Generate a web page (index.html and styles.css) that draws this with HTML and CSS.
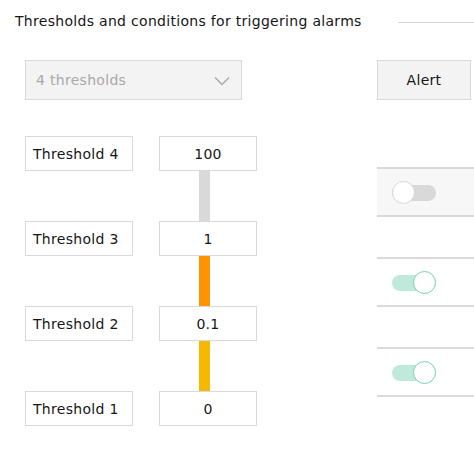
FILE: index.html
```html
<!DOCTYPE html>
<html>
<head>
<meta charset="utf-8">
<link rel="stylesheet" href="styles.css">
</head>
<body>
<div class="page">
  <div class="header">
    <div class="title">Thresholds and conditions for triggering alarms</div>
    <div class="rule"></div>
  </div>
  <div class="main">
    <div class="left">
      <div class="select">
        <span class="select-text">4 thresholds</span>
        <svg class="chevron" width="16" height="10" viewBox="0 0 16 10"><path d="M1 1.5 L8 8.5 L15 1.5" fill="none" stroke="#a8a8a8" stroke-width="1.4"/></svg>
      </div>
      <div class="thresholds">
        <div class="trow">
          <div class="box label">Threshold 4</div>
          <div class="box value">100</div>
        </div>
        <div class="bar bar-grey"></div>
        <div class="trow">
          <div class="box label">Threshold 3</div>
          <div class="box value">1</div>
        </div>
        <div class="bar bar-orange"></div>
        <div class="trow">
          <div class="box label">Threshold 2</div>
          <div class="box value">0.1</div>
        </div>
        <div class="bar bar-yellow"></div>
        <div class="trow">
          <div class="box label">Threshold 1</div>
          <div class="box value">0</div>
        </div>
      </div>
    </div>
    <div class="right">
      <div class="btn">Alert</div>
      <div class="toggles">
        <div class="trow-r shaded">
          <div class="toggle off"><span class="track"></span><span class="knob"></span></div>
        </div>
        <div class="trow-r">
          <div class="toggle on"><span class="track"></span><span class="knob"></span></div>
        </div>
        <div class="trow-r">
          <div class="toggle on"><span class="track"></span><span class="knob"></span></div>
        </div>
      </div>
    </div>
  </div>
</div>
</body>
</html>
```

FILE: styles.css
```css
html, body {
  margin: 0;
  padding: 0;
  background: #ffffff;
  overflow: hidden;
}
body {
  font-family: "DejaVu Sans", "Open Sans", sans-serif;
  font-size: 14px;
  letter-spacing: 0.3px;
  color: #161616;
  width: 474px;
  height: 463px;
}
.page {
  display: flex;
  flex-direction: column;
}
.header {
  display: flex;
  align-items: center;
  height: 20px;
  margin-top: 11px;
  padding-left: 15px;
}
.title {
  font-size: 14px;
  line-height: 20px;
  white-space: nowrap;
}
.rule {
  margin-left: auto;
  width: 76px;
  height: 1px;
  margin-top: 2px;
  background: #d6d6d6;
}
.main {
  display: flex;
  padding-left: 25px;
  margin-top: 29px;
}
.left {
  width: 232px;
  display: flex;
  flex-direction: column;
}
.select {
  width: 217px;
  height: 40px;
  box-sizing: border-box;
  border: 1px solid #d9d9d9;
  background: #f3f3f3;
  display: flex;
  align-items: center;
  justify-content: space-between;
  padding: 0 11px 0 10px;
}
.select-text {
  color: #a9a9a9;
}
.chevron {
  display: block;
  margin-top: 1px;
}
.thresholds {
  margin-top: 36px;
  display: flex;
  flex-direction: column;
}
.trow {
  display: flex;
  gap: 26px;
}
.box {
  height: 35px;
  box-sizing: border-box;
  border: 1px solid #d9d9d9;
  background: #fff;
  display: flex;
  align-items: center;
}
.label {
  width: 108px;
  padding-left: 7px;
}
.value {
  width: 98px;
  justify-content: center;
}
.bar {
  width: 11px;
  height: 50px;
  margin-left: 174px;
}
.bar-grey { background: #d9d9d9; }
.bar-orange { background: #ff9305; }
.bar-yellow { background: #f6b800; }

.right {
  margin-left: 120px;
  width: 120px;
  flex-shrink: 0;
  display: flex;
  flex-direction: column;
}
.btn {
  width: 94px;
  height: 40px;
  box-sizing: border-box;
  border: 1px solid #d9d9d9;
  background: #f3f3f3;
  display: flex;
  align-items: center;
  justify-content: center;
}
.toggles {
  margin-top: 67px;
  display: flex;
  flex-direction: column;
  gap: 40px;
}
.trow-r {
  height: 50px;
  box-sizing: border-box;
  border-top: 2px solid #d9d9d9;
  border-bottom: 2px solid #d9d9d9;
  display: flex;
  align-items: center;
  padding-left: 15px;
}
.shaded {
  background: #f7f7f7;
}
.toggle {
  position: relative;
  width: 44px;
  height: 23px;
}
.track {
  position: absolute;
  left: 0;
  top: 4px;
  width: 44px;
  height: 16px;
  border-radius: 8px;
}
.knob {
  position: absolute;
  top: 0;
  width: 23px;
  height: 23px;
  box-sizing: border-box;
  border-radius: 50%;
  background: #fff;
}
.off .track { background: #d9d9d9; }
.off .knob { left: 0; border: 1px solid #d6d6d6; }
.on .track { background: #bfeadb; }
.on .knob { right: 0; border: 1px solid #73d5ac; }
```
